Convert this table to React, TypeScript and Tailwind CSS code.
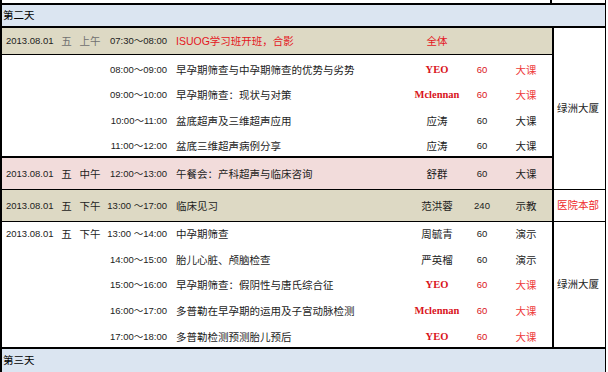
import React from 'react';

type Item = {
    date?: string;
    wd?: string;
    period?: string;
    time: string;
    title: string;
    speaker: string;
    dur?: string;
    kind?: string;
    muted?: boolean;
    redTitle?: boolean;
    redSpeaker?: boolean;
    foreign?: boolean;
    red?: boolean;
};

const black = 'text-[#1c1c1c]';

const Row: React.FC<{ item: Item; className: string }> = ({ item, className }) => {
    const headGray = item.muted ? 'text-[#707070]' : black;
    return (
        <div className={`grid grid-cols-[55px_19px_28px_68px_238px_54px_36px_52px] leading-[12px] ${className}`}>
            <div className={`pl-[4px] text-[9.5px] ${black}`}>{item.date}</div>
            <div className={`text-center ${headGray}`}>{item.wd}</div>
            <div className={`text-center ${headGray}`}>{item.period}</div>
            <div className={`pr-[5px] text-right text-[9.5px] whitespace-pre ${black}`}>{item.time}</div>
            <div className={`pl-[4px] whitespace-nowrap ${item.redTitle ? 'text-[#e4161e]' : black}`}>{item.title}</div>
            <div
                className={`text-center whitespace-nowrap ${
                    item.foreign
                        ? "font-['Liberation_Serif',serif] font-bold text-[#d9141c]"
                        : item.redSpeaker
                          ? 'text-[#e4161e]'
                          : black
                }`}
            >
                {item.speaker}
            </div>
            <div className={`text-center text-[9.5px] ${item.red ? 'text-[#d9141c]' : black}`}>{item.dur}</div>
            <div className={`text-center ${item.red ? 'text-[#ee3a3a]' : black}`}>{item.kind}</div>
        </div>
    );
};

const morning: Item[] = [
    { time: '08:00～09:00', title: '早孕期筛查与中孕期筛查的优势与劣势', speaker: 'YEO', dur: '60', kind: '大课', foreign: true, red: true },
    { time: '09:00～10:00', title: '早孕期筛查：现状与对策', speaker: 'Mclennan', dur: '60', kind: '大课', foreign: true, red: true },
    { time: '10:00～11:00', title: '盆底超声及三维超声应用', speaker: '应涛', dur: '60', kind: '大课' },
    { time: '11:00～12:00', title: '盆底三维超声病例分享', speaker: '应涛', dur: '60', kind: '大课' },
];
const morningHeights = ['h-[25px]', 'h-[25px]', 'h-[26px]', 'h-[25px]'];

const afternoon: Item[] = [
    { date: '2013.08.01', wd: '五', period: '下午', time: '13:00 ～14:00', title: '中孕期筛查', speaker: '周毓青', dur: '60', kind: '演示' },
    { time: '14:00～15:00', title: '胎儿心脏、颅脑检查', speaker: '严英榴', dur: '60', kind: '演示' },
    { time: '15:00～16:00', title: '早孕期筛查：假阴性与唐氏综合征', speaker: 'YEO', dur: '60', kind: '大课', foreign: true, red: true },
    { time: '16:00～17:00', title: '多普勒在早孕期的运用及子宫动脉检测', speaker: 'Mclennan', dur: '60', kind: '大课', foreign: true, red: true },
    { time: '17:00～18:00', title: '多普勒检测预测胎儿预后', speaker: 'YEO', dur: '60', kind: '大课', foreign: true, red: true },
];
const afternoonHeights = ['h-[22px]', 'h-[26px]', 'h-[25px]', 'h-[26px]', 'h-[26px]'];

const App: React.FC = () => {
    return (
        <div className="w-[608px] h-[372px] overflow-hidden bg-white text-[10.5px] font-['Liberation_Sans','Noto_Sans_CJK_SC',sans-serif]">
            <div className="w-[606px] border-l-2 border-r border-black">
                {/* tail of the previous day */}
                <div className="flex h-[3px]">
                    <div className="w-[550px] border-r-2 border-black" />
                </div>

                <div className="h-[25px] border-y-2 border-black bg-[#dbe5f1] flex items-center pl-[1px] text-black">
                    第二天
                </div>

                {/* morning block */}
                <div className="flex">
                    <div className="w-[552px] border-r-2 border-black flex flex-col">
                        <Row
                            item={{ date: '2013.08.01', wd: '五', period: '上午', time: '07:30～08:00', title: 'ISUOG学习班开班，合影', speaker: '全体', muted: true, redTitle: true, redSpeaker: true }}
                            className="h-[27px] items-center border-b border-black bg-[#ddd9c4]"
                        />
                        {morning.map((item, i) => (
                            <Row key={item.time} item={item} className={`${morningHeights[i]} items-end pb-[4px]`} />
                        ))}
                        <Row
                            item={{ date: '2013.08.01', wd: '五', period: '中午', time: '12:00～13:00', title: '午餐会：产科超声与临床咨询', speaker: '舒群', dur: '60', kind: '大课' }}
                            className="h-[33px] items-center border-t-2 border-black bg-[#f2dcdb]"
                        />
                    </div>
                    <div className="flex-1 flex items-center pl-[3px] text-[#1c1c1c]">绿洲大厦</div>
                </div>

                {/* clinical visit */}
                <div className="flex h-[33px] border-y border-black">
                    <div className="w-[552px] border-r-2 border-black">
                        <Row
                            item={{ date: '2013.08.01', wd: '五', period: '下午', time: '13:00 ～17:00', title: '临床见习', speaker: '范洪蓉', dur: '240', kind: '示教' }}
                            className="h-full items-center bg-[#ddd9c4]"
                        />
                    </div>
                    <div className="flex-1 flex items-center pl-[3px] text-[#ee2a2a]">医院本部</div>
                </div>

                {/* afternoon block */}
                <div className="flex">
                    <div className="w-[552px] border-r-2 border-black flex flex-col">
                        {afternoon.map((item, i) => (
                            <Row key={item.time} item={item} className={`${afternoonHeights[i]} items-end pb-[4px]`} />
                        ))}
                    </div>
                    <div className="flex-1 flex items-center pl-[3px] text-[#1c1c1c]">绿洲大厦</div>
                </div>

                <div className="h-[25px] border-t-2 border-black bg-[#dbe5f1] flex items-center pl-[1px] text-black">
                    第三天
                </div>
            </div>
        </div>
    );
};

export default App;
